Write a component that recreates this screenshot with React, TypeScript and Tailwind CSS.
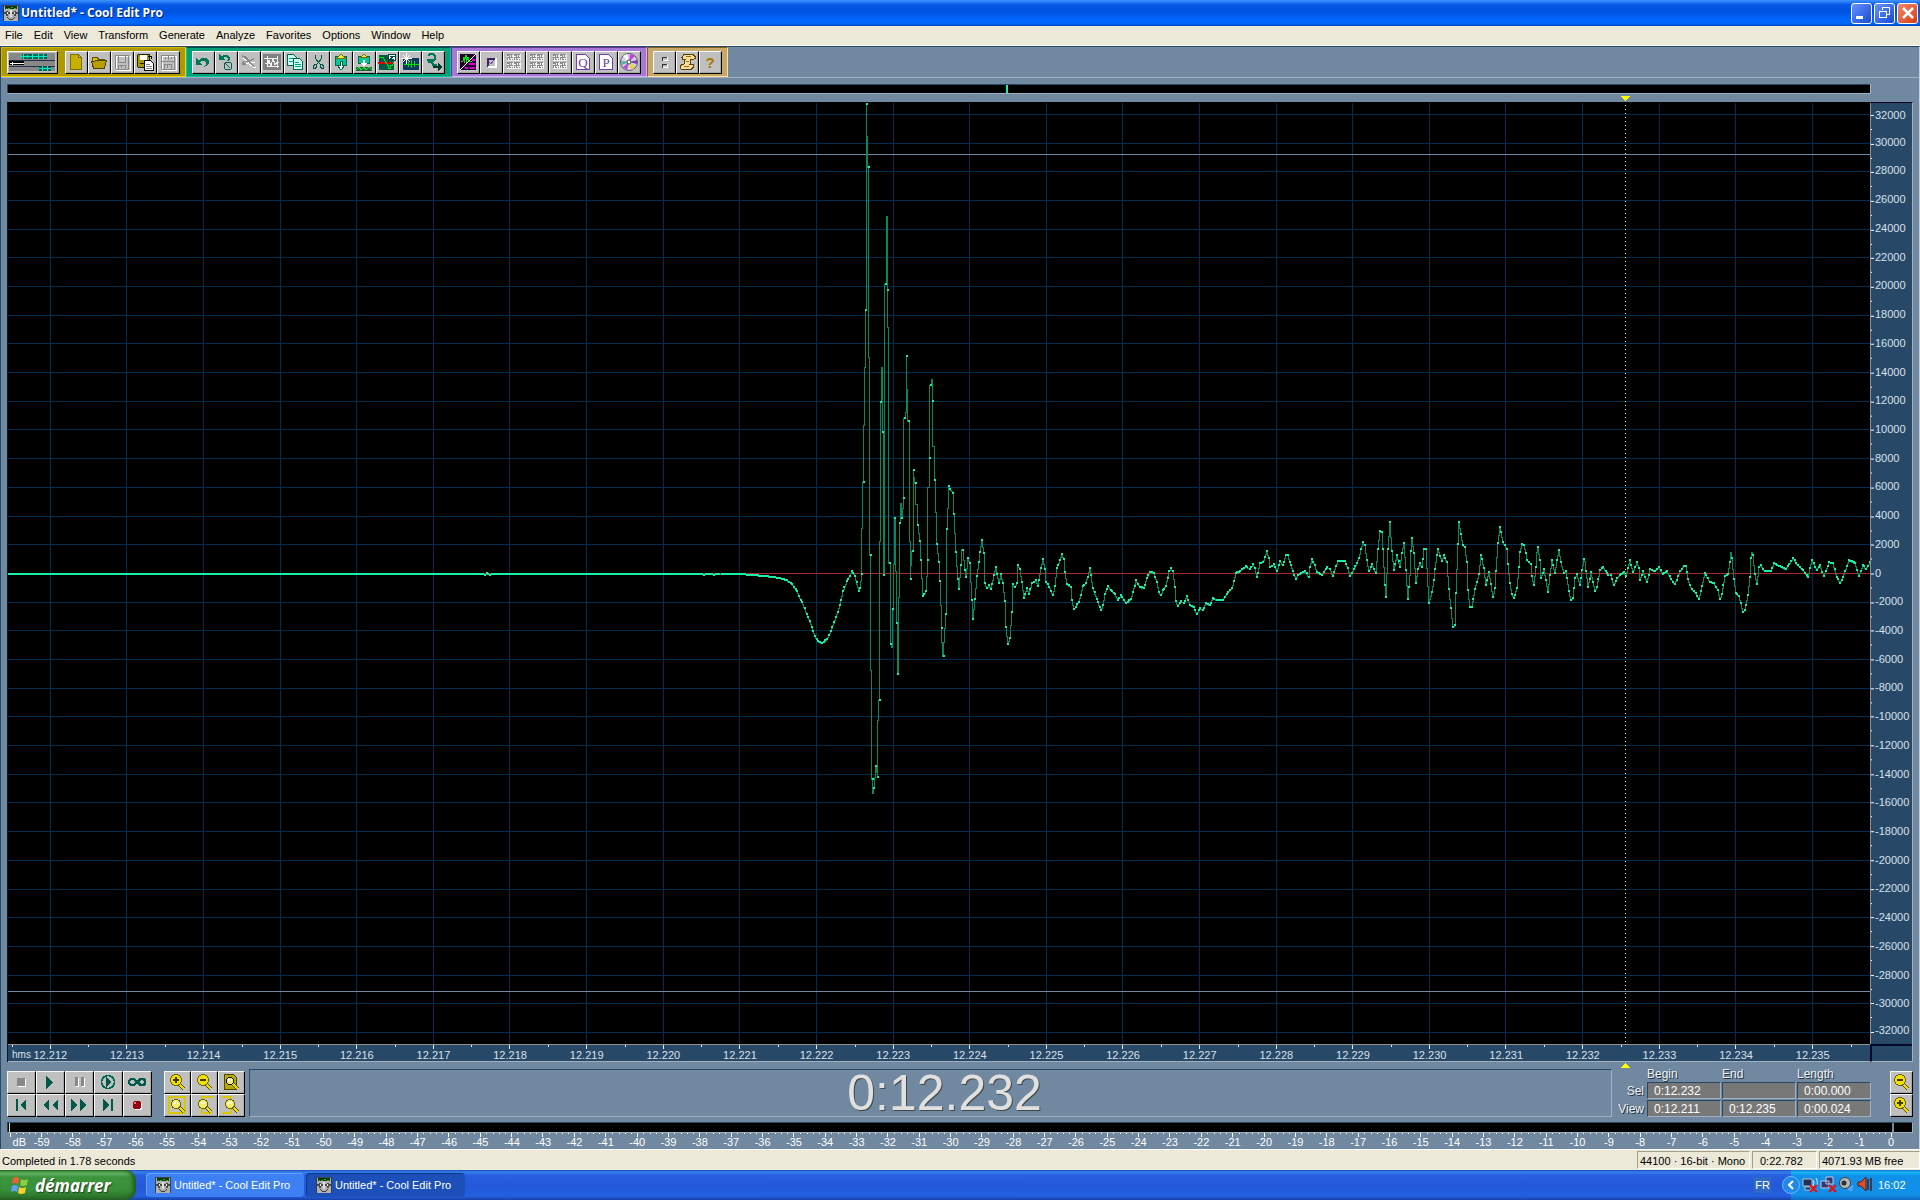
import React from 'react';
import clsx from 'clsx';

const menus = ['File', 'Edit', 'View', 'Transform', 'Generate', 'Analyze', 'Favorites', 'Options', 'Window', 'Help'];

// Key points of the recording as x,y pairs in canvas units, the zero line is at y = 573.5
const keyPoints: number[] = [
  8, 574, 483, 574, 485, 574.5, 487, 573, 490, 574.5, 493, 574, 700, 574, 704, 574.5, 709, 574, 714, 574.5, 722, 574, 740, 574, 753, 575, 765, 576,
  780, 578, 787, 580, 792, 584, 797, 591, 802, 602, 807, 614, 812, 627, 815, 636, 818, 641, 822, 643, 827, 639, 831, 631,
  836, 617, 840, 605, 843, 591, 847, 581, 852, 571, 855, 576, 859, 591, 860, 588, 862, 574, 863.5, 482, 866, 310, 867, 104,
  868.7, 167, 869.5, 357, 870.7, 555, 871.5, 670, 872.5, 779, 873, 793, 874, 788, 876, 766, 878, 777, 878.7, 720, 879.7, 700,
  880.3, 541, 881, 402, 882, 367, 883, 432, 884, 575, 885, 564, 885.7, 284, 887, 216, 888, 290, 888.7, 327, 889.7, 563,
  891, 644, 892, 647, 893, 609, 895, 518, 897, 623, 898, 674, 899, 665, 899.5, 597, 900, 523, 901, 503, 902, 518, 904, 498,
  904.7, 418, 906, 412, 907, 356, 908.7, 421, 910, 541, 911, 579, 912.7, 551, 914, 470, 915.7, 483, 918, 525, 920, 541,
  921, 560, 923, 596, 926, 591, 928, 560, 928.7, 487, 930, 458, 930.7, 385, 932, 379, 933, 401, 933.7, 446, 935, 480,
  937, 544, 939, 562, 940, 581, 942, 628, 943.5, 656, 946, 614, 947, 529, 949, 486, 953, 493, 954, 514, 956, 552, 958, 579,
  959, 589, 961, 565, 962, 549, 963, 550, 965, 570, 966, 577, 968, 558, 970, 563, 972, 600, 973, 619, 975, 599, 977, 576,
  979, 562, 980, 552, 982, 540, 984, 553, 985, 583, 987, 588, 989, 585, 991, 589, 994, 575, 996, 567, 999, 583, 1001, 574,
  1003, 583, 1005, 601, 1006, 627, 1008, 644, 1010, 638, 1012, 612, 1013, 584, 1015, 587, 1017, 583, 1018, 565, 1020, 569,
  1022, 582, 1024, 598, 1027, 588, 1029, 594, 1032, 583, 1036, 580, 1038, 586, 1041, 568, 1043, 559, 1045, 569, 1046, 582,
  1048, 584, 1053, 595, 1055, 586, 1057, 568, 1060, 560, 1062, 554, 1064, 559, 1065, 572, 1067, 584, 1071, 587, 1072, 600,
  1074, 609, 1079, 602, 1083, 586, 1086, 583, 1090, 568, 1091, 575, 1093, 588, 1097, 599, 1101, 610, 1103, 605, 1105, 594,
  1108, 586, 1111, 590, 1115, 594, 1118, 600, 1121, 595, 1126, 603, 1131, 599, 1133, 592, 1136, 580, 1140, 587, 1144, 588,
  1147, 578, 1150, 572, 1154, 573, 1157, 582, 1159, 592, 1161, 595, 1163, 590, 1166, 586, 1169, 571, 1171, 568, 1173, 571,
  1175, 587, 1176, 601, 1178, 606, 1181, 601, 1184, 603, 1187, 596, 1190, 605, 1194, 607, 1197, 614, 1200, 608, 1203, 610,
  1206, 603, 1210, 605, 1213, 598, 1217, 600, 1223, 600, 1228, 592, 1232, 588, 1234, 581, 1236, 573, 1240, 571, 1246, 566,
  1250, 569, 1253, 564, 1255, 568, 1257, 577, 1260, 563, 1263, 562, 1265, 557, 1267, 551, 1269, 558, 1270, 567, 1274, 564,
  1277, 571, 1280, 561, 1283, 565, 1286, 555, 1288, 555, 1290, 562, 1293, 571, 1296, 579, 1298, 575, 1305, 571, 1309, 577,
  1310, 567, 1312, 559, 1315, 565, 1317, 572, 1322, 575, 1327, 567, 1330, 569, 1333, 576, 1336, 566, 1338, 561, 1345, 561,
  1348, 568, 1350, 576, 1354, 569, 1359, 558, 1361, 549, 1363, 542, 1365, 545, 1367, 560, 1369, 571, 1372, 564, 1376, 573,
  1378, 549, 1380, 531, 1382, 532, 1383, 549, 1385, 585, 1386, 597, 1388, 549, 1390, 522, 1392, 551, 1394, 570, 1397, 555,
  1400, 567, 1402, 553, 1404, 543, 1406, 570, 1408, 599, 1410, 575, 1411, 551, 1412, 538, 1414, 553, 1416, 583, 1418, 569,
  1420, 563, 1422, 567, 1424, 549, 1426, 549, 1427, 568, 1429, 603, 1432, 592, 1434, 580, 1435, 569, 1437, 555, 1438, 549,
  1442, 561, 1444, 555, 1447, 562, 1449, 589, 1451, 608, 1453, 627, 1455, 625, 1456, 593, 1458, 544, 1459, 522, 1461, 534,
  1463, 545, 1465, 547, 1467, 562, 1468, 590, 1470, 607, 1472, 607, 1475, 589, 1479, 574, 1481, 555, 1484, 568, 1486, 585,
  1489, 572, 1491, 584, 1493, 597, 1495, 588, 1496, 571, 1498, 543, 1500, 527, 1501, 532, 1503, 542, 1505, 545, 1507, 549,
  1508, 564, 1510, 583, 1512, 594, 1514, 598, 1517, 588, 1519, 567, 1520, 552, 1522, 544, 1524, 545, 1526, 553, 1527, 560,
  1531, 564, 1532, 576, 1534, 585, 1536, 567, 1537, 552, 1538, 547, 1540, 560, 1541, 578, 1544, 569, 1546, 580, 1548, 592,
  1550, 575, 1552, 560, 1555, 573, 1557, 560, 1559, 550, 1561, 562, 1564, 573, 1566, 571, 1569, 591, 1571, 600, 1573, 598,
  1575, 578, 1577, 574, 1580, 585, 1582, 570, 1584, 559, 1585, 561, 1588, 587, 1591, 572, 1595, 591, 1597, 587, 1600, 570,
  1603, 567, 1606, 571, 1608, 575, 1611, 575, 1614, 585, 1617, 578, 1620, 575, 1624, 572, 1626, 576, 1630, 560, 1633, 572,
  1637, 562, 1639, 568, 1640, 580, 1643, 571, 1647, 582, 1650, 569, 1655, 571, 1659, 567, 1663, 574, 1667, 571, 1671, 579,
  1675, 584, 1680, 571, 1684, 566, 1686, 566, 1688, 579, 1692, 589, 1696, 593, 1699, 599, 1702, 586, 1705, 573, 1710, 582,
  1714, 583, 1718, 590, 1720, 599, 1722, 594, 1725, 576, 1728, 574, 1730, 562, 1731, 552, 1732, 558, 1734, 579, 1736, 593,
  1739, 596, 1741, 603, 1743, 612, 1745, 610, 1748, 595, 1750, 577, 1751, 558, 1752, 552, 1753, 555, 1755, 574, 1757, 584,
  1759, 567, 1761, 565, 1765, 571, 1771, 571, 1774, 563, 1780, 566, 1786, 569, 1793, 558, 1798, 565, 1803, 570, 1808, 577,
  1810, 568, 1812, 560, 1817, 570, 1820, 565, 1824, 576, 1829, 562, 1833, 563, 1837, 577, 1840, 583, 1843, 577, 1849, 560,
  1855, 563, 1859, 576, 1863, 565, 1866, 569, 1870, 562,
];

const points: [number, number][] = [];
for (let i = 0; i < keyPoints.length; i += 2) points.push([keyPoints[i], keyPoints[i + 1]]);

// Stepped line: the curve moves one pixel column at a time
const wavePath = (() => {
  let d = `M8.5 ${points[0][1] + 0.5}`;
  for (let i = 1; i < points.length; i++) {
    const [x0, y0] = points[i - 1];
    const [x1, y1] = points[i];
    const steps = y0 === y1 ? 1 : Math.max(1, Math.round(x1 - x0));
    for (let s = 1; s <= steps; s++) {
      const x = Math.floor(x0 + ((x1 - x0) * s) / steps) - 0.5;
      const y = Math.round(y0 + ((y1 - y0) * s) / steps) + 0.5;
      d += `H${x}V${y}`;
    }
  }
  return d;
})();

// One dot per sample at 44.1 kHz
const dotPath = (() => {
  let d = '';
  let k = 0;
  let lastX = 0;
  for (let x = 9; x < 1870; x += 1.737) {
    while (k < points.length - 2 && points[k + 1][0] < x) k++;
    const [x0, y0] = points[k];
    const [x1, y1] = points[k + 1];
    const nearest = x - x0 < x1 - x ? points[k] : points[k + 1];
    const snap = Math.abs(nearest[0] - x) < 0.9;
    const y = snap ? nearest[1] : y0 + ((y1 - y0) * (x - x0)) / (x1 - x0);
    const px = Math.round(snap ? nearest[0] : x);
    if (px === lastX) continue;
    lastX = px;
    d += `M${px - 1} ${Math.round(y) - 1}h2v2h-2z`;
  }
  return d;
})();

const times = Array.from({ length: 24 }, (_, i) => (12.212 + i * 0.001).toFixed(3));
const levels = Array.from({ length: 33 }, (_, i) => 32000 - i * 2000);
const decibels = Array.from({ length: 60 }, (_, i) => i - 59);

const timeX = (i: number) => Math.floor(50.3 + i * 76.61) + 0.5;
const levelY = (i: number) => Math.floor(114.4 + i * 28.69) + 0.5;

const Waveform: React.FC = () => (
  <svg
    viewBox="8 102 1862 942"
    preserveAspectRatio="none"
    shapeRendering="crispEdges"
    className="block h-0 min-h-full w-full"
    role="img"
    aria-label="Waveform"
  >
    <g stroke="#002c50">
      {times.map((t, i) => <line key={t} x1={timeX(i)} x2={timeX(i)} y1={103} y2={1044} />)}
      {levels.map((l, i) => <line key={l} x1={8} x2={1870} y1={levelY(i)} y2={levelY(i)} />)}
    </g>
    <path d="M8 154.5H1870M8 991.5H1870" stroke="#7088a0" />
    <path d="M8 573.5H1870" stroke="#a82828" />
    <path d={wavePath} fill="none" stroke="#088858" />
    <path d={dotPath} fill="#18f0a8" />
    <path d="M1625.5 105V1044" stroke="#ffff40" strokeDasharray="1 3" />
  </svg>
);

type IconProps = { children: React.ReactNode; size?: string };
const Icon: React.FC<IconProps> = ({ children, size = 'size-[18px]' }) => (
  <svg viewBox="0 0 18 18" shapeRendering="crispEdges" fill="none" className={clsx('block shrink-0', size)} aria-hidden="true">
    {children}
  </svg>
);

type ToolProps = { label: string; className?: string; children: React.ReactNode };
const Tool: React.FC<ToolProps> = ({ label, className = 'h-[23px] w-[23px]', children }) => (
  <button
    type="button"
    aria-label={label}
    className={clsx('flex items-center justify-center border border-t-[#f8f8f8] border-l-[#f8f8f8] border-r-black border-b-black bg-[#c0c0c0] pr-px pb-px shadow-[inset_-1px_-1px_0_#a8a8a8]', className)}
  >
    {children}
  </button>
);

const Grid2: React.FC = () => (
  <>
    {[2, 9].map((x) => [1, 9].map((y) => (
      <g key={`${x}-${y}`}>
        <path d={`M${x} ${y}h7v7h-7z`} fill="#8c8c8c" />
        <path d={`M${x} ${y + 2.5}h2M${x + 1.5} ${y + 4}v2M${x + 3.5} ${y + 1}v2M${x + 3} ${y + 4.5}h3M${x + 5.5} ${y + 1}v2M${x + 4.5} ${y + 5}v2M${x} ${y + 6.5}h7M${x + 6.5} ${y}v7`} stroke="#f0f0f0" />
      </g>
    )))}
  </>
);

const fileTools = [
  { label: 'New', icon: <path d="M3.5 1.5h8l3 3v12h-11zM11.5 1.5v3h3" fill="#c8b000" stroke="#807000" /> },
  { label: 'Open', icon: <><path d="M2.5 14V4.500h5l1 2h6v3" fill="#d8c000" stroke="#605000" /><path d="M1.500 8.500h3l1-1h11l-2 7.500h-11z" fill="#b8a000" stroke="#504000" /></> },
  { label: 'Save', icon: <><path d="M3.500 3.500h14v14h-14z" stroke="#fff" /><path d="M2.500 2.500h13v14h-12l-1-1zM5.500 3v6h7V3M5.500 16v-4h7v4M8.500 13v2" stroke="#888" /></> },
  { label: 'Save As', icon: <><path d="M1 1h13v11h-4v3H2l-1-1z" fill="#a89800" /><path d="M1.500 1.500h12v5M1.500 1.500v12l1 1h6M4 10h4v4" stroke="#202000" /><path d="M4 2h7v5H4z" fill="#fff" /><path d="M12 3h3v3" stroke="#000" /><path d="M8.500 7.500h6l3 3v7h-9z" fill="#fff" stroke="#000" /><path d="M10 11.500h4M10 13.500h6M10 15.500h6" stroke="#888" /></> },
  { label: 'Save Copy', icon: <><path d="M3.500 3.500h14v14h-14z" stroke="#fff" /><path d="M2.500 2.500h13v14h-12l-1-1zM2.500 8.500h13M6.500 4v2M9.500 3v4M12.500 4v2M5.500 16v-5h7v5M8.500 12v3" stroke="#888" /></> },
];

const editTools = [
  { label: 'Undo', icon: <path d="M2 5v7h7l-3-2.500c3-3 6-2 6 .5s-1 3-2 4c5-1 6-5 4-8S7 5 4.500 7.500z" fill="#007858" /> },
  { label: 'Repeat', icon: <><path d="M2 1v6h6l-2-2c3-2 5-1 5 1s-1 2-2 3c4-1 5-4 3-6S7 1 4.500 3.500z" fill="#007858" /><circle cx="11" cy="13" r="4" stroke="#006048" /><path d="M8.500 10.500l5 5" stroke="#006048" /></> },
  { label: 'Delete', icon: <><path d="M3 5l6 5 6-1M3 12l5-2 5 4 3 1" stroke="#fff" /><path d="M2 3l3 1 4 4 5-2M3 9l5-1 6 5M3 9v2h3" stroke="#888" strokeWidth="1.500" /></> },
  { label: 'Trim', icon: <><path d="M0 1h18v16H0z" fill="#808080" /><path d="M1 5.500h13M4.500 3v10M2 10.500h3l1-3 2 6 2-8 2 6 2-2h2M14.500 3v12M4 13.500h12" stroke="#f0f0f0" /></> },
  { label: 'Copy', icon: <><path d="M1.500 1.500h6l3 3v8h-9z" fill="#c8fff0" stroke="#006850" /><path d="M7.500 5.500h6l3 3v8h-9z" fill="#c8fff0" stroke="#006850" /><path d="M3 5.500h4M3 8.500h4M9 9.500h4M9 11.500h6M9 13.500h6" stroke="#00a080" /></> },
  { label: 'Cut', icon: <path d="M6.500 2v3l1 2 4 4.500M12.500 2v3l-1 2-4 4.500M5.500 11.500h2v2l-1 2h-2v-2zM11.500 11.500h2l1 2v2h-2l-1-2z" stroke="#005848" /> },
  { label: 'Paste', icon: <><path d="M3.500 3.500h11v9h-11z" fill="#00c898" stroke="#006850" /><path d="M5 5l4-4 4 4z" fill="#f8e840" stroke="#807000" /><path d="M8 8h2v4h3l-4 5-4-5h3z" fill="#fff" stroke="#006048" /></> },
  { label: 'Mix Paste', icon: <><path d="M3.500 3.500h11v7h-11z" fill="#00c898" stroke="#006850" /><path d="M6 4l3-3 3 3z" fill="#f8e840" stroke="#807000" /><path d="M1 14h16v4H1z" fill="#206040" /><path d="M1 17l3-3 2 3 3-3 2 3 3-3 3 3" stroke="#20e020" /><path d="M8 7h2v3h2l-3 4-3-4h2z" fill="#fff" /></> },
  { label: 'Zero Crossings', icon: <><path d="M1 2h15v15H1z" fill="#005848" /><path d="M0 9.500h16" stroke="#e00000" strokeWidth="2" /><path d="M1 4.500h4l3 5 2 3v3h2v-3h2l2-3" stroke="#00e000" /><path d="M10.500 1.500h7v6h-7z" fill="#fff" stroke="#004838" /><path d="M12 3.500h4l-4 2.500h4" stroke="#004838" /></> },
  { label: 'Adjust Length', icon: <><path d="M2 5h16v12H2z" fill="#103860" /><path d="M3 11.500h15M7.500 9v5M10.500 7v8M13.500 8v6" stroke="#00e000" /><path d="M0 5.500h11M5.500 0v11M2 2l7 7M9 2L2 9" stroke="#fff" /></> },
  { label: 'Convert', icon: <><path d="M4 3l2-2h3l2 2v3l-3 3H5L4 7h5M8 9l1 3h4" stroke="#007858" strokeWidth="2" /><path d="M9 13h5v-3l4 4-4 4v-3H9z" fill="#003830" /></> },
];

const viewTools = [
  { label: 'Spectral View', icon: <><path d="M1 1h16v16H1z" fill="#280030" /><path d="M2 8.500h2l1-4v5l2-7v7l2-5 1 4h3" stroke="#00e000" /><path d="M1 17L17 1" stroke="#fff" /><path d="M10 11h6M6 15h3M11 15h5M13 7h3" stroke="#e000d8" strokeWidth="2" /></> },
  { label: 'Show Selection', icon: <><path d="M5.500 14V5.500H13" stroke="#402060" strokeWidth="2" /><path d="M13.500 5v8.500H6" stroke="#fff" strokeWidth="2" /><path d="M7 9l2 2 3-4" stroke="#8050b0" /></> },
  { label: 'Play List', icon: <Grid2 /> },
  { label: 'Cue List', icon: <Grid2 /> },
  { label: 'Frequency Analysis', icon: <Grid2 /> },
];

const helpTools = [
  { label: 'Settings', icon: <><path d="M7.500 8V4.500H12M7.500 15v-3.500H12" stroke="#303030" /><path d="M12.500 4v3.500H8M12.500 11v3.500H8" stroke="#fff" /></> },
  { label: 'Scripts', icon: <><path d="M6 1.500h9l2 2v2l-2 1h-2l-1 5h3v3l-2 2H4l-2-1v-2l2-2h2l1-5H5l-1-2z" fill="#f4dca0" stroke="#604000" /><path d="M8 3.500h5M8 8.500h3M6 13.500h5" stroke="#a07000" /></> },
];

type IconTool = { label: string; icon: React.ReactNode };
const ToolList: React.FC<{ tools: IconTool[] }> = ({ tools }) => (
  <>
    {tools.map((tool) => (
      <Tool key={tool.label} label={tool.label}><Icon>{tool.icon}</Icon></Tool>
    ))}
  </>
);

const LetterTool: React.FC<{ letter: string; label: string }> = ({ letter, label }) => (
  <Tool label={label}>
    <svg viewBox="0 0 18 18" className="block size-[18px]" aria-hidden="true">
      <path d="M2.500 1.500h9l4 4v11h-13z" fill="#fff" stroke="#7040a8" shapeRendering="crispEdges" />
      <text x="9" y="14" textAnchor="middle" className="fill-[#7040a8] font-['Liberation_Serif',serif] text-[13px]">{letter}</text>
    </svg>
  </Tool>
);

const DiscIcon: React.FC = () => (
  <svg viewBox="0 0 18 18" className="block size-[18px]" aria-hidden="true">
    <circle cx="9" cy="9" r="8.500" fill="#d8d0e0" stroke="#605070" />
    <path d="M9 9L3 3l4-2z" fill="#fff" />
    <path d="M9 9l1-8 5 2z" fill="#c040e0" />
    <path d="M9 9l8-2v4z" fill="#8040b0" />
    <path d="M9 9l-2 8-4-3z" fill="#b050d0" />
    <path d="M9 9l3 8 3-3z" fill="#e8d820" />
    <path d="M9 9L1 8l1 4z" fill="#40b8a0" />
    <circle cx="9" cy="9" r="2" fill="#fff" stroke="#444" />
  </svg>
);

const AppIcon: React.FC = () => (
  <Icon size="size-4">
    <path d="M1 0h16v18H1z" fill="#b0b0b0" stroke="#383838" />
    <path d="M2 1h14v4H2z" fill="#083808" />
    <path d="M3 3.500h2M6 3.500h2M9 2.500h2M12 3.500h3" stroke="#30c030" />
    <path d="M1 8h7v2H1zM10 8h7v2h-7zM3 7h3v5H3zM12 7h3v5h-3z" fill="#484848" />
    <path d="M4 8h2v2H4zM12 8h2v2h-2z" fill="#e8e8e8" />
    <path d="M4 13l3 3h4l3-3" stroke="#303030" />
    <path d="M8 6h2v7H8z" fill="#e0e0e0" />
  </Icon>
);

const transport: IconTool[] = [
  { label: 'Stop', icon: <><path d="M6 6h8v8H6z" fill="#fff" /><path d="M5 5h8v8H5z" fill="#888" /></> },
  { label: 'Play', icon: <path d="M5 3l7 6.500L5 16z" fill="#005848" /> },
  { label: 'Pause', icon: <><path d="M6 5h3v9H6zM12 5h3v9h-3z" fill="#fff" /><path d="M5 4h3v9H5zM11 4h3v9h-3z" fill="#888" /></> },
  { label: 'Play to End', icon: <><circle cx="9" cy="9" r="6.500" stroke="#006850" strokeWidth="1.500" /><path d="M7 4l5 5-5 5z" fill="#005848" /></> },
  { label: 'Loop', icon: <><path d="M2 5h4l3 2 3-2h4l2 2v4l-2 2h-4l-3-2-3 2H2l-2-2V7z" fill="#005848" /><path d="M3 7h2l2 2-2 2H3L2 9zM13 7h2l1 2-1 2h-2l-2-2z" fill="#c0c0c0" /></> },
  { label: 'Go to Beginning', icon: <path d="M4 3h2v12H4zM14 3v12L8 9z" fill="#005848" /> },
  { label: 'Rewind', icon: <path d="M8 3v12L2 9zM17 3v12l-6-6z" fill="#005848" /> },
  { label: 'Fast Forward', icon: <path d="M1 3l6 6-6 6zM10 3l6 6-6 6z" fill="#005848" /> },
  { label: 'Go to End', icon: <path d="M4 3l6 6-6 6zM12 3h2v12h-2z" fill="#005848" /> },
  { label: 'Record', icon: <><circle cx="10" cy="10" r="4.500" fill="#fff" /><circle cx="9" cy="9" r="4.500" fill="#900010" /><path d="M6 6h2v2H6z" fill="#e08080" /></> },
];

type LensProps = { sign?: 'plus' | 'minus'; frame?: string; small?: boolean };
const Lens: React.FC<LensProps> = ({ sign, frame, small }) => (
  <>
    {frame && <path d={frame} stroke="#d8c800" strokeWidth="2" />}
    <path d="M11 11l5 5" stroke="#504800" strokeWidth="4" />
    <path d="M11 11l5 5" stroke="#f0e000" strokeWidth="2" />
    <circle cx="8" cy={sign ? 7 : 8} r={small ? 3.500 : frame ? 4.500 : 5.500} fill={sign ? '#f0e000' : '#f4ec70'} stroke={small ? '#101000' : '#706400'} />
    {!sign && <path d="M6 6h2v2H6zM9 6h1v2H9z" fill="#fff" />}
    {sign && <path d={sign === 'plus' ? 'M5 7h6M8 4v6' : 'M5 7h6'} stroke="#403800" strokeWidth="2" />}
  </>
);

const zoomTools: IconTool[] = [
  { label: 'Zoom In', icon: <Lens sign="plus" /> },
  { label: 'Zoom Out', icon: <Lens sign="minus" /> },
  { label: 'Zoom Full', icon: <><path d="M2.500 1.500h9l3 3v12h-12z" fill="#b8a800" stroke="#504800" /><Lens small /></> },
  { label: 'Zoom to Selection', icon: <Lens frame="M1 1h16v16H1z" /> },
  { label: 'Zoom to Left Edge', icon: <Lens frame="M18 1H7v16h10" /> },
  { label: 'Zoom to Right Edge', icon: <Lens frame="M0 1h9v16H0" /> },
];

const inset = 'border border-t-[#284868] border-l-[#284868] border-b-[#a0b0c0] border-r-[#a0b0c0]';

type FieldProps = { label: string; value: string };
const TimeField: React.FC<FieldProps> = ({ label, value }) => (
  <input
    aria-label={label}
    defaultValue={value}
    className={clsx('h-[17px] w-[74px] rounded-none bg-[#787878] px-1.5 text-[12px] leading-none text-white', inset)}
  />
);

const TitleBar: React.FC = () => (
  <header className="flex h-[26px] items-center bg-[linear-gradient(#3c94ff_0,#2a7cf4_2px,#0458e4_5px,#0054e0_12px,#0066ff_19px,#0068ff_23px,#0048c8_26px)] pr-0.5 pl-[3px]">
    <AppIcon />
    <h1 className="ml-0.5 flex-1 font-['Open_Sans',sans-serif] text-[12px] font-bold text-white [text-shadow:1px_1px_0_#002070]">
      Untitled* - Cool Edit Pro
    </h1>
    <div className="flex gap-0.5">
      <button type="button" aria-label="Minimize" className="flex size-[21px] items-center justify-center rounded-[3px] border border-white bg-linear-to-br from-[#6890f8] to-[#1848d8]">
        <Icon><path d="M3 12h7v3H3z" fill="#fff" /></Icon>
      </button>
      <button type="button" aria-label="Restore" className="flex size-[21px] items-center justify-center rounded-[3px] border border-white bg-linear-to-br from-[#6890f8] to-[#1848d8]">
        <Icon><path d="M6.500 6V3.500h7v7H11M6 3h8" stroke="#fff" /><path d="M3.500 7.500h7v6h-7zM3 7h8" stroke="#fff" /></Icon>
      </button>
      <button type="button" aria-label="Close" className="flex size-[21px] items-center justify-center rounded-[3px] border border-white bg-linear-to-br from-[#f08868] to-[#d83808]">
        <svg viewBox="0 0 18 18" className="size-[18px]" aria-hidden="true"><path d="M4 4l10 10M14 4L4 14" stroke="#fff" strokeWidth="2.500" /></svg>
      </button>
    </div>
  </header>
);

const Toolbar: React.FC = () => (
  <div className="flex h-[31px] border-b border-[#a0b0c0] text-[16px]">
    <div className="flex gap-[7px] border border-t-[#d0b800] border-l-[#d0b800] border-r-[#f0d800] border-b-[#f0d800] bg-[#b09800] px-[5px] pt-[3px]">
      <Tool label="Multitrack View" className="h-[23px] w-[51px]">
        <svg viewBox="0 0 49 21" shapeRendering="crispEdges" className="h-[21px] w-[49px]" aria-hidden="true">
          <path d="M1 1h47v18H1z" fill="#888" />
          <path d="M14 2h26v5H14zM32 14h12v5H32z" fill="#006858" />
          <path d="M1 8.500h47M1 14.500h47" stroke="#203050" />
          <path d="M1 9h15v4H1z" fill="#000" />
          <path d="M12 4.500h28M16 2v5M20 3v3M25 2v5M31 2v5M36 2v5" stroke="#00f0c0" strokeWidth="1.500" />
          <path d="M2 11.500h14M5 9.500v4M9 10.500v2" stroke="#fff" />
          <path d="M32 16.500h12M35 14v5M40 14v5" stroke="#00f0c0" />
        </svg>
      </Tool>
      <div className="flex"><ToolList tools={fileTools} /></div>
    </div>
    <div className="flex border border-t-[#005040] border-l-[#00c898] border-r-[#00c898] border-b-[#00c898] bg-[#00a078] px-[5px] pt-[3px]">
      <ToolList tools={editTools} />
    </div>
    <div className="flex border border-t-[#603890] border-l-[#603890] border-r-[#d8b0f8] border-b-[#d8b0f8] bg-[#a878d8] px-[5px] pt-[3px]">
      <ToolList tools={viewTools} />
      <LetterTool letter="Q" label="Quick Filter" />
      <LetterTool letter="P" label="Parametric Equalizer" />
      <Tool label="CD Player"><DiscIcon /></Tool>
    </div>
    <div className="flex border border-t-[#806020] border-l-[#806020] border-r-[#f8e0a0] border-b-[#f8e0a0] bg-[#c8a868] px-[5px] pt-[3px]">
      <ToolList tools={helpTools} />
      <Tool label="Help">
        <span className="font-['Liberation_Sans',sans-serif] text-[15px] leading-none font-bold text-[#a87800]">?</span>
      </Tool>
    </div>
  </div>
);

const TimeRuler: React.FC = () => (
  <div className="flex h-[18px] flex-col border-t border-b border-t-[#909090] border-b-[#a0b0c0] bg-[#284868] text-[11px] text-[#d8e0e8]">
    <svg viewBox="8 0 1862 4" preserveAspectRatio="none" shapeRendering="crispEdges" className="block h-1 w-full" aria-hidden="true">
      {times.map((t, i) => <path key={t} d={`M${timeX(i)} 0v4M${timeX(i) - 38} 0v2`} stroke="#e0e8f0" />)}
      <path d="M1851.500 0v2" stroke="#e0e8f0" />
    </svg>
    <div className="flex leading-3">
      <span className="flex-[4]" />
      {times.map((t, i) => (
        <span key={t} className="flex w-0 flex-[76.6] justify-center">
          {i === 0 && <span className="flex-1 text-[10px]">hms</span>}
          <span>{t}</span>
          {i === 0 && <span className="flex-1" />}
        </span>
      ))}
      <span className="flex-[19]" />
    </div>
  </div>
);

const LevelRuler: React.FC = () => (
  <div className="flex min-h-0 flex-1 border-l border-[#909090] bg-[#284868] text-[11px] text-[#d8e0e8]">
    <svg viewBox="0 102 3 942" preserveAspectRatio="none" shapeRendering="crispEdges" className="block h-0 min-h-full w-[3px]" aria-hidden="true">
      {levels.map((l, i) => <path key={l} d={`M0 ${levelY(i)}h3M0 ${levelY(i) + 14}h1`} stroke="#fff" />)}
    </svg>
    <div className="flex flex-col">
      {levels.map((l) => (
        <span key={l} className={clsx('flex min-h-0 items-center pb-px pl-px leading-none', Math.abs(l) === 32000 ? 'flex-[88]' : 'flex-[100]')}>
          {l}
        </span>
      ))}
    </div>
  </div>
);

const LevelMeter: React.FC = () => (
  <div className="mt-[5px] h-[27px] text-[11px] text-white">
    <div className={clsx('flex h-[11px] justify-between bg-black pr-[18px] pl-px', inset)}>
      <span className="w-px bg-[#f8f000]" />
      <span className="w-0.5 bg-[#7088a0]" />
    </div>
    <svg viewBox="7 0 1906 4" preserveAspectRatio="none" shapeRendering="crispEdges" className="block h-1 w-full" aria-hidden="true">
      {decibels.map((db, i) => {
        const x = Math.floor(10 + (i + 1) * 31.35);
        return <path key={db} d={`M${x + 0.5} 0v4M${x - 5.5} 0v1M${x - 11.5} 0v1M${x - 17.5} 0v1M${x - 24.5} 0v1`} stroke="#fff" />;
      })}
      <path d="M10.500 0v4" stroke="#fff" />
    </svg>
    <div className="flex leading-[10px]">
      <span className="w-0 flex-[19] text-right">dB</span>
      {decibels.map((db) => <span key={db} className="w-0 flex-[31.35] text-center">{db}</span>)}
      <span className="flex-[6]" />
    </div>
  </div>
);

const Controls: React.FC = () => (
  <div className="flex items-end">
    <div className="grid grid-cols-5">
      {transport.map((tool) => (
        <Tool key={tool.label} label={tool.label} className="h-[23px] w-[29px]"><Icon>{tool.icon}</Icon></Tool>
      ))}
    </div>
    <div className="ml-3 grid grid-cols-3">
      {zoomTools.map((tool) => (
        <Tool key={tool.label} label={tool.label} className="h-[23px] w-[27px]"><Icon>{tool.icon}</Icon></Tool>
      ))}
    </div>
    <div className={clsx('ml-1 flex h-12 flex-1 items-center justify-center pl-7 text-[50px] leading-none text-[#e0e0e0] [text-shadow:1px_1px_0_#404848]', inset)}>
      0:12.232
    </div>
    <div className="ml-1.5 grid grid-cols-[auto_auto_auto_auto] items-center gap-px text-[12px] leading-none text-[#f0f0f0] [text-shadow:1px_1px_0_#203040]">
      <span />
      <span className="h-2.5 leading-[6px]">Begin</span>
      <span className="h-2.5 leading-[6px]">End</span>
      <span className="h-2.5 leading-[6px]">Length</span>
      <span className="pr-0.5 text-right">Sel</span>
      <TimeField label="Selection begin" value="0:12.232" />
      <TimeField label="Selection end" value="" />
      <TimeField label="Selection length" value="0:00.000" />
      <span className="pr-0.5 text-right">View</span>
      <TimeField label="View begin" value="0:12.211" />
      <TimeField label="View end" value="0:12.235" />
      <TimeField label="View length" value="0:00.024" />
    </div>
    <div className="ml-[19px] flex flex-col">
      <Tool label="Zoom Out Vertically"><Icon><Lens sign="minus" /></Icon></Tool>
      <Tool label="Zoom In Vertically"><Icon><Lens sign="plus" /></Icon></Tool>
    </div>
  </div>
);

const StatusBar: React.FC = () => (
  <div className="flex h-[21px] items-stretch gap-0.5 border-t border-white bg-[#ece9d8] pt-px text-[11px] leading-[18px]">
    <span className="flex-1 pt-px pl-0.5">Completed in 1.78 seconds</span>
    <span className="mb-px w-[113px] border border-t-[#a0a090] border-l-[#a0a090] border-r-white border-b-white pl-0.5 whitespace-nowrap">44100 · 16-bit · Mono</span>
    <span className="mb-px w-[65px] border border-t-[#a0a090] border-l-[#a0a090] border-r-white border-b-white pl-[7px]">0:22.782</span>
    <span className="mb-px w-[101px] border border-t-[#a0a090] border-l-[#a0a090] border-r-white border-b-white pl-0.5">4071.93 MB free</span>
  </div>
);

const TrayIcons: React.FC = () => (
  <svg viewBox="0 0 72 18" className="h-[18px] w-[72px]" aria-hidden="true">
    <path d="M1 3h9v7H1zM3 11h6v3H3z" fill="#203058" stroke="#b0c0d8" />
    <path d="M11 4q2 3 0 6M14 2q3 4 0 9" fill="none" stroke="#e0e8f8" />
    <path d="M8 9l7 7M15 9l-7 7" stroke="#e81010" strokeWidth="2" />
    <path d="M24 1h7v7h-7zM19 5h8v7h-8z" fill="#303870" stroke="#c0c8e0" />
    <path d="M27 9l7 7M34 9l-7 7" stroke="#e81010" strokeWidth="2" />
    <circle cx="43" cy="7" r="5.500" fill="#b8b8b8" stroke="#404040" />
    <circle cx="42" cy="7" r="2.500" fill="#303030" />
    <path d="M46 14l5-4M48 15l3-2" stroke="#80a8ff" strokeWidth="1.500" />
    <path d="M56 6h3l5-5v14l-5-5h-3z" fill="#d85030" stroke="#601808" />
    <path d="M66 3v11M69 2v13" stroke="#501000" strokeWidth="1.300" />
  </svg>
);

const Taskbar: React.FC = () => (
  <footer className="flex h-[30px] items-stretch bg-[linear-gradient(#1848b8_0,#3880f0_2px,#2860e0_5px,#2458d8_15px,#2460e0_26px,#1840a8_30px)] text-[11px] text-white">
    <button type="button" className="flex w-[136px] items-center gap-[5px] rounded-r-[10px] bg-[linear-gradient(#2a7a2a_0,#68b868_3px,#3c943c_7px,#389038_20px,#286828_30px)] pl-[10px] shadow-[inset_-3px_0_4px_#205820]">
      <svg viewBox="0 0 20 20" className="size-5" aria-hidden="true">
        <path d="M3 3q3-2 6 0L8 9q-3-2-6 0z" fill="#f06030" />
        <path d="M11 4q3 2 7 0l-1 6q-4 2-7 0z" fill="#88d040" />
        <path d="M2 11q3-2 6 0l-1 6q-3-2-6 0z" fill="#60a0f8" />
        <path d="M9 12q3 2 7 0l-1 6q-4 2-7 0z" fill="#f8d030" />
      </svg>
      <span className="font-['Noto_Sans',sans-serif] text-[17px] leading-none font-bold italic [text-shadow:1px_1px_1px_#204020]">démarrer</span>
    </button>
    <button type="button" className="my-[3px] ml-[10px] flex w-[158px] items-center gap-[3px] rounded-sm bg-[#3c80f4] pl-[9px] shadow-[inset_1px_1px_0_#68a0ff]">
      <AppIcon /><span>Untitled* - Cool Edit Pro</span>
    </button>
    <button type="button" className="my-[3px] ml-0.5 flex w-[159px] items-center gap-[3px] rounded-sm bg-[#1c50b8] pl-[10px] shadow-[inset_1px_1px_0_#103888]">
      <AppIcon /><span>Untitled* - Cool Edit Pro</span>
    </button>
    <div className="ml-auto flex items-center">
      <span className="mr-5 bg-[#3068c8] px-px leading-4">FR</span>
    </div>
    <div className="flex w-[129px] items-center bg-[linear-gradient(#1068c0_0,#18b8f8_2px,#1090e8_6px,#1090e8_25px,#1068c0_30px)]">
      <button type="button" aria-label="Show hidden icons" className="-ml-[9px] flex size-[18px] items-center justify-center rounded-full border border-[#70b8f8] bg-[#2088e8]">
        <svg viewBox="0 0 10 10" className="size-2.5" aria-hidden="true"><path d="M7 1L3 5l4 4" fill="none" stroke="#fff" strokeWidth="2" /></svg>
      </button>
      <span className="ml-0.5"><TrayIcons /></span>
      <time className="ml-1">16:02</time>
    </div>
  </footer>
);

const App: React.FC = () => (
  <div className="flex min-h-screen flex-col bg-[#7088a0] font-['Liberation_Sans',Arial,sans-serif]">
    <TitleBar />
    <nav className="flex h-5 items-center gap-[11px] border-b border-white bg-[#ece9d8] pl-[5px] text-[11px] text-black">
      {menus.map((menu) => <button key={menu} type="button">{menu}</button>)}
    </nav>
    <main className="flex flex-1 flex-col border-t border-r border-l border-t-[#284868] border-r-[#c0d0e0] border-l-[#284868]">
      <Toolbar />
      <div className="flex flex-1 flex-col px-1.5 pt-1.5">
        <div className="pr-[42px]">
          <svg viewBox="7 84 1864 10" preserveAspectRatio="none" shapeRendering="crispEdges" className="block h-2.5 w-full" aria-hidden="true">
            <path d="M7 84h1864v10H7z" fill="#a0b0c0" />
            <path d="M7 84h1863v9H7z" fill="#284868" />
            <path d="M8 85h1862v8H8z" fill="#000" />
            <path d="M1006 85h2v8h-2z" fill="#18f0a8" />
          </svg>
          <svg viewBox="7 94 1864 8" preserveAspectRatio="none" shapeRendering="crispEdges" className="block h-2 w-full" aria-hidden="true">
            <path d="M1621 96h9l-4.500 5z" fill="#ff0" />
          </svg>
        </div>
        <div className="flex flex-1">
          <div className="flex flex-1 flex-col border-l border-[#001828]">
            <div className="flex-1 bg-black"><Waveform /></div>
            <TimeRuler />
          </div>
          <div className="flex w-[43px] flex-col border-t border-r border-t-[#000020] border-r-[#a0b0c0]">
            <LevelRuler />
            <div className="h-[18px] border-t-2 border-b border-l-2 border-t-[#000828] border-b-[#a0b0c0] border-l-[#000828] bg-[#284868]" />
          </div>
        </div>
        <svg viewBox="7 1062 1906 7" preserveAspectRatio="none" shapeRendering="crispEdges" className="block h-[7px] w-full" aria-hidden="true">
          <path d="M1621 1068h9l-4.500-5z" fill="#ff0" />
        </svg>
        <Controls />
        <LevelMeter />
      </div>
    </main>
    <StatusBar />
    <Taskbar />
  </div>
);

export default App;
